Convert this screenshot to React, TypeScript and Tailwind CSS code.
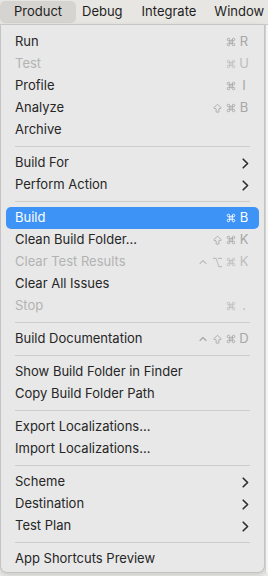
import { Fragment } from "react";
import { Command, ArrowBigUp, Option, ChevronUp } from "lucide-react";

type Mod = "cmd" | "shift" | "opt" | "ctrl";

type Item = {
  label: string;
  mods?: Mod[];
  keyChar?: string;
  disabled?: boolean;
  submenu?: boolean;
  active?: boolean;
};

// null = separator
const MENU: (Item | null)[] = [
  { label: "Run", mods: ["cmd"], keyChar: "R" },
  { label: "Test", mods: ["cmd"], keyChar: "U", disabled: true },
  { label: "Profile", mods: ["cmd"], keyChar: "I" },
  { label: "Analyze", mods: ["shift", "cmd"], keyChar: "B" },
  { label: "Archive" },
  null,
  { label: "Build For", submenu: true },
  { label: "Perform Action", submenu: true },
  null,
  { label: "Build", mods: ["cmd"], keyChar: "B", active: true },
  { label: "Clean Build Folder…", mods: ["shift", "cmd"], keyChar: "K" },
  { label: "Clear Test Results", mods: ["ctrl", "opt", "cmd"], keyChar: "K", disabled: true },
  { label: "Clear All Issues" },
  { label: "Stop", mods: ["cmd"], keyChar: ".", disabled: true },
  null,
  { label: "Build Documentation", mods: ["ctrl", "shift", "cmd"], keyChar: "D" },
  null,
  { label: "Show Build Folder in Finder" },
  { label: "Copy Build Folder Path" },
  null,
  { label: "Export Localizations…" },
  { label: "Import Localizations…" },
  null,
  { label: "Scheme", submenu: true },
  { label: "Destination", submenu: true },
  { label: "Test Plan", submenu: true },
  null,
  { label: "App Shortcuts Preview" },
];

function ModIcon({ mod }: { mod: Mod }) {
  if (mod === "cmd") return <Command size={10} strokeWidth={2.2} />;
  if (mod === "shift") return <ArrowBigUp size={11} strokeWidth={2} />;
  if (mod === "opt") return <Option size={11} strokeWidth={2.2} />;
  return <ChevronUp size={12} strokeWidth={2.2} />;
}

function Chevron() {
  return (
    <svg width="7" height="11" viewBox="0 0 7 11" className="mr-[2px]">
      <path d="M1.2 1.2 L5.6 5.5 L1.2 9.8" fill="none" stroke="#2b2b2b" strokeWidth="1.6" strokeLinecap="round" strokeLinejoin="round" />
    </svg>
  );
}

function Row({ item }: { item: Item }) {
  const textColor = item.active ? "text-white" : item.disabled ? "text-[#b3b3b3]" : "text-[#262626]";
  const keyColor = item.active ? "text-white" : item.disabled ? "text-[#bdbdbd]" : "text-[#a6a6a6]";
  return (
    <div className={`mx-[5px] h-[22px] flex items-center pl-[9px] pr-[8px] rounded-[5px] ${item.active ? "bg-[#3d94f6]" : ""}`}>
      <span className={`flex-1 text-[13px] ${textColor}`}>{item.label}</span>
      {item.keyChar && (
        <span className={`flex items-center ${keyColor}`}>
          <span className="flex items-center gap-[3px] mr-[1px]">
            {item.mods?.map((m, i) => <ModIcon key={i} mod={m} />)}
          </span>
          <span className="w-[14px] text-center text-[13px]">{item.keyChar}</span>
        </span>
      )}
      {item.submenu && <Chevron />}
    </div>
  );
}

export default function App() {
  return (
    <div className="w-[268px] h-[576px] bg-[#ecebea] font-['Inter',sans-serif] overflow-hidden">
      {/* menu bar */}
      <div className="h-[25px] flex items-center bg-[#e8e6e3] border-b border-[#cfcdca] text-[13px] text-[#1e1e1e] whitespace-nowrap">
        <div className="shrink-0 h-[22px] w-[76px] flex items-center pl-[14px] rounded-[5px] bg-[#d6d4d1]">Product</div>
        <div className="shrink-0 pl-[6px]">Debug</div>
        <div className="shrink-0 pl-[19px]">Integrate</div>
        <div className="shrink-0 pl-[18px]">Window</div>
      </div>

      {/* dropdown */}
      <div className="flex">
        <div className="w-[265px] h-[548px] bg-[#e8e8e8] border border-[#c4c4c4] border-t-0 rounded-b-[7px] pt-[6px] pb-[3px] shadow-[0_2px_6px_rgba(0,0,0,0.15)]">
          {MENU.map((item, i) => (
            <Fragment key={i}>
              {item ? (
                <Row item={item} />
              ) : (
                <div className="h-[11px] flex items-center px-[14px]">
                  <div className="h-px w-full bg-[#cdcdcd]" />
                </div>
              )}
            </Fragment>
          ))}
        </div>
        <div className="flex-1 bg-[#f4f4f4] border-l border-[#d0d0d0]" />
      </div>
    </div>
  );
}
